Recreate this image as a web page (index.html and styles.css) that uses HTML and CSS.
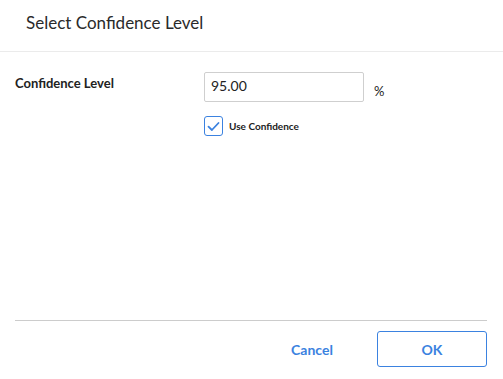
FILE: index.html
```html
<!DOCTYPE html>
<html lang="en">
<head>
    <meta charset="UTF-8">
    <meta name="viewport" content="width=device-width, initial-scale=1.0">
    <title>Select Confidence Level</title>
    <link rel="stylesheet" href="styles.css">
</head>
<body>
    <div class="dialog">
        <div class="dialog-header">
            <h2>Select Confidence Level</h2>
        </div>

        <div class="dialog-body">
            <div class="field-row">
                <label class="field-label" for="confidence">Confidence Level</label>
                <div class="field-control">
                    <div class="input-row">
                        <input id="confidence" class="text-input" type="text" value="95.00">
                        <span class="unit">%</span>
                    </div>
                    <label class="check-row">
                        <span class="checkbox">
                            <svg width="13" height="11" viewBox="0 0 13 11">
                                <path d="M1.5 5.6 L4.9 9 L11.5 2" fill="none" stroke="#3b82e0" stroke-width="1.8" stroke-linecap="round" stroke-linejoin="round"/>
                            </svg>
                        </span>
                        <span class="check-text">Use Confidence</span>
                    </label>
                </div>
            </div>
        </div>

        <div class="dialog-footer">
            <button class="btn btn-link">Cancel</button>
            <button class="btn btn-outline">OK</button>
        </div>
    </div>
</body>
</html>
```

FILE: styles.css
```css
body {
    margin: 0;
    font-family: "Lato", "Liberation Sans", sans-serif;
    color: #222;
    background: #fff;
}
.dialog {
    width: 503px;
    height: 379px;
    display: flex;
    flex-direction: column;
}
.dialog-header {
    height: 51px;
    border-bottom: 1px solid #ebebeb;
    padding-left: 26px;
    display: flex;
    align-items: center;
}
.dialog-header h2 {
    margin: 0;
    font-size: 17px;
    font-weight: normal;
    color: #2a2a2a;
    position: relative;
    top: -3px;
}
.dialog-body {
    flex: 1;
    padding: 20px 15px 0 15px;
}
.field-row {
    display: flex;
}
.field-label {
    width: 189px;
    font-size: 13px;
    font-weight: bold;
    padding-top: 3px;
}
.input-row {
    display: flex;
    align-items: flex-end;
}
.text-input {
    width: 160px;
    height: 30px;
    box-sizing: border-box;
    border: 1px solid #cfcfcf;
    border-radius: 2px;
    padding: 0 6px 3px 6px;
    font-family: inherit;
    font-size: 14px;
    color: #222;
    background: #fff;
}
.unit {
    margin-left: 10px;
    font-size: 13px;
    padding-bottom: 3px;
}
.check-row {
    display: flex;
    align-items: center;
    margin-top: 14px;
}
.checkbox {
    width: 19px;
    height: 20px;
    box-sizing: border-box;
    border: 1px solid #3b82e0;
    border-radius: 3px;
    display: flex;
    align-items: center;
    justify-content: center;
}
.check-text {
    margin-left: 6px;
    font-size: 10px;
    font-weight: bold;
}
.dialog-footer {
    margin: 0 16px 12px 15px;
    border-top: 1px solid #cccccc;
    padding-top: 10px;
    display: flex;
    justify-content: flex-end;
    align-items: center;
}
.btn {
    font-family: inherit;
    font-size: 14px;
    font-weight: bold;
    color: #3b82e0;
    background: #fff;
    cursor: pointer;
}
.btn-link {
    border: none;
    width: 110px;
    height: 36px;
    margin-right: 10px;
}
.btn-outline {
    width: 110px;
    height: 36px;
    border: 1px solid #3b82e0;
    border-radius: 3px;
}
```
